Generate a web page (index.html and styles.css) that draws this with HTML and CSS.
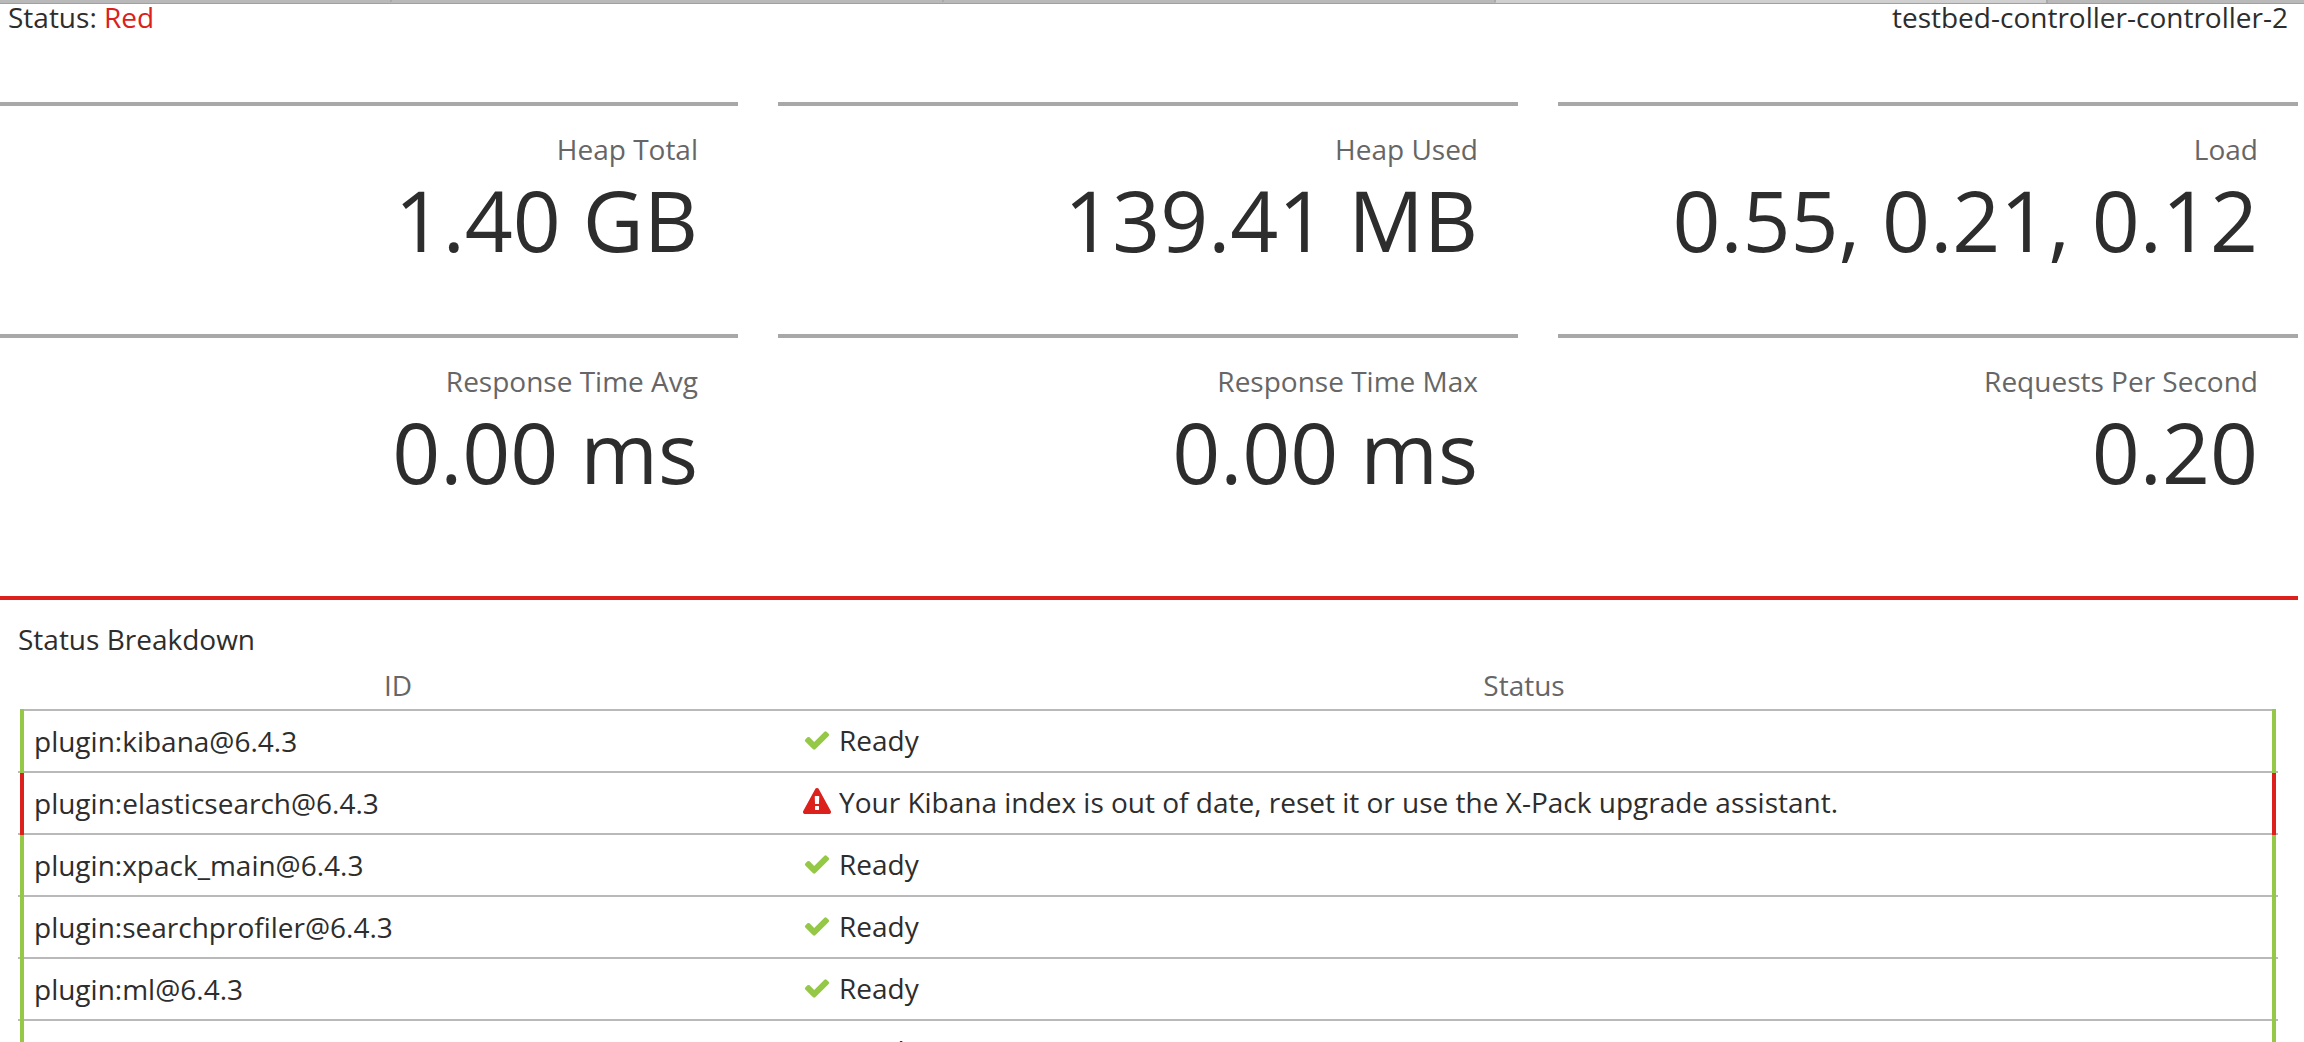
FILE: index.html
```html
<!DOCTYPE html>
<html lang="en">
<head>
<meta charset="utf-8">
<title>Status</title>
<link rel="stylesheet" href="styles.css">
</head>
<body>
<svg class="sprite" aria-hidden="true">
  <symbol id="check" viewBox="0 0 1792 1792"><path d="M1671 566q0 40-28 68l-724 724-136 136q-28 28-68 28t-68-28l-136-136-362-362q-28-28-28-68t28-68l136-136q28-28 68-28t68 28l294 295 656-657q28-28 68-28t68 28l136 136q28 28 28 68z"/></symbol>
  <symbol id="warning" viewBox="0 0 1792 1792"><path d="M1024 1375v-190q0-14-9.500-23.500t-22.500-9.500h-192q-13 0-22.500 9.500t-9.500 23.500v190q0 14 9.500 23.500t22.500 9.500h192q13 0 22.500-9.500t9.500-23.500zm-2-374l18-459q0-12-10-19-13-11-24-11h-220q-11 0-24 11-10 7-10 21l17 457q0 10 10 16.500t24 6.500h185q14 0 23.500-6.500t10.500-16.500zm-14-934l768 1408q35 63-2 126-17 29-46.500 46t-63.500 17h-1536q-34 0-63.500-17t-46.500-46q-37-63-2-126l768-1408q17-31 47-49t65-18 65 18 47 49z"/></symbol>
</svg>
<div class="tabs"><i class="tab tab-first"></i><i class="tab"></i><i class="tab"></i><i class="tab tab-active"></i><i class="tab tab-last"></i></div>
<header class="header"><div>Status: <span class="red">Red</span></div><div>testbed-controller-controller-2</div></header>
<main class="content">
  <section class="metrics">
    <div class="metric"><div class="label">Heap Total</div><div class="value">1.40 GB</div></div>
    <div class="metric"><div class="label">Heap Used</div><div class="value">139.41 MB</div></div>
    <div class="metric"><div class="label">Load</div><div class="value">0.55, 0.21, 0.12</div></div>
    <div class="metric"><div class="label">Response Time Avg</div><div class="value">0.00 ms</div></div>
    <div class="metric"><div class="label">Response Time Max</div><div class="value">0.00 ms</div></div>
    <div class="metric"><div class="label">Requests Per Second</div><div class="value">0.20</div></div>
  </section>
  <section class="breakdown">
    <div class="title">Status Breakdown</div>
    <table class="statuses">
      <thead><tr><th class="col-id">ID</th><th>Status</th></tr></thead>
      <tbody>
        <tr class="row ok"><td>plugin:kibana@6.4.3</td><td class="state"><svg class="icon"><use href="#check"/></svg>Ready</td></tr>
        <tr class="row bad"><td>plugin:elasticsearch@6.4.3</td><td class="state"><svg class="icon"><use href="#warning"/></svg>Your Kibana index is out of date, reset it or use the X-Pack upgrade assistant.</td></tr>
        <tr class="row ok"><td>plugin:xpack_main@6.4.3</td><td class="state"><svg class="icon"><use href="#check"/></svg>Ready</td></tr>
        <tr class="row ok"><td>plugin:searchprofiler@6.4.3</td><td class="state"><svg class="icon"><use href="#check"/></svg>Ready</td></tr>
        <tr class="row ok"><td>plugin:ml@6.4.3</td><td class="state"><svg class="icon"><use href="#check"/></svg>Ready</td></tr>
        <tr class="row ok"><td>plugin:tilemap@6.4.3</td><td class="state"><svg class="icon"><use href="#check"/></svg>Ready</td></tr>
      </tbody>
    </table>
  </section>
</main>
</body>
</html>
```
FILE: styles.css
```css
* { box-sizing: border-box; }
html, body { height: 100%; }
body {
  margin: 0;
  overflow: hidden;
  background: #fff;
  color: #2d2d2d;
  font: 28px/40px "Open Sans", "Noto Sans", sans-serif;
}
.sprite { display: none; }
.tabs { display: flex; height: 4px; background: #b9b9b9; border-bottom: 1px solid #a0a0a0; }
.tab { width: 552px; border-right: 2px solid #a9a9a9; height: 2px; }
.tab-first { width: 392px; }
.tab-active { height: 3px; background: #d0d0d0; }
.tab-last { flex: 1; border: 0; }
.header { display: flex; justify-content: space-between; height: 98px; padding: 0 16px 0 8px; line-height: 26px; }
.red { color: #dc201c; }
.content { width: 2300px; margin-left: -2px; }
.metrics {
  display: grid;
  grid-template-columns: repeat(3, 740px);
  grid-auto-rows: 232px;
  column-gap: 40px;
  height: 494px;
}
.metric { height: 192px; border-top: 4px solid #a8a8a8; padding: 23px 40px 0 0; text-align: right; }
.label { color: #666; line-height: 40px; }
.value { margin-top: 1px; font-size: 84px; line-height: 100px; }
.breakdown { border-top: 4px solid #dc201c; padding: 19px 22px 0 20px; }
.title { height: 41px; }
.statuses { width: 2256px; margin-left: 2px; border-collapse: collapse; table-layout: fixed; }
.statuses th { height: 50px; padding: 0; font-weight: 400; color: #666; }
.statuses .col-id { width: 752px; }
.row { border-left: 4px solid #95c847; border-right: 4px solid #95c847; }
.bad { border-color: #dc201c; }
.statuses td { position: relative; height: 62px; padding: 0 10px; border-top: 2px solid #b9b9b9; }
.statuses .state { padding: 0 10px 2px 29px; }
/* Row rules stick out slightly past the coloured side borders. */
.row + .row td::before {
  content: "";
  position: absolute;
  top: -2px;
  left: -6px;
  width: 2px;
  height: 2px;
  background: #b9b9b9;
}
.row + .row .state::before { left: auto; right: -6px; }
.icon { width: 28px; height: 28px; margin-right: 8px; vertical-align: -3px; }
.ok .icon { fill: #95c847; }
.bad .icon { fill: #dc201c; }
```
